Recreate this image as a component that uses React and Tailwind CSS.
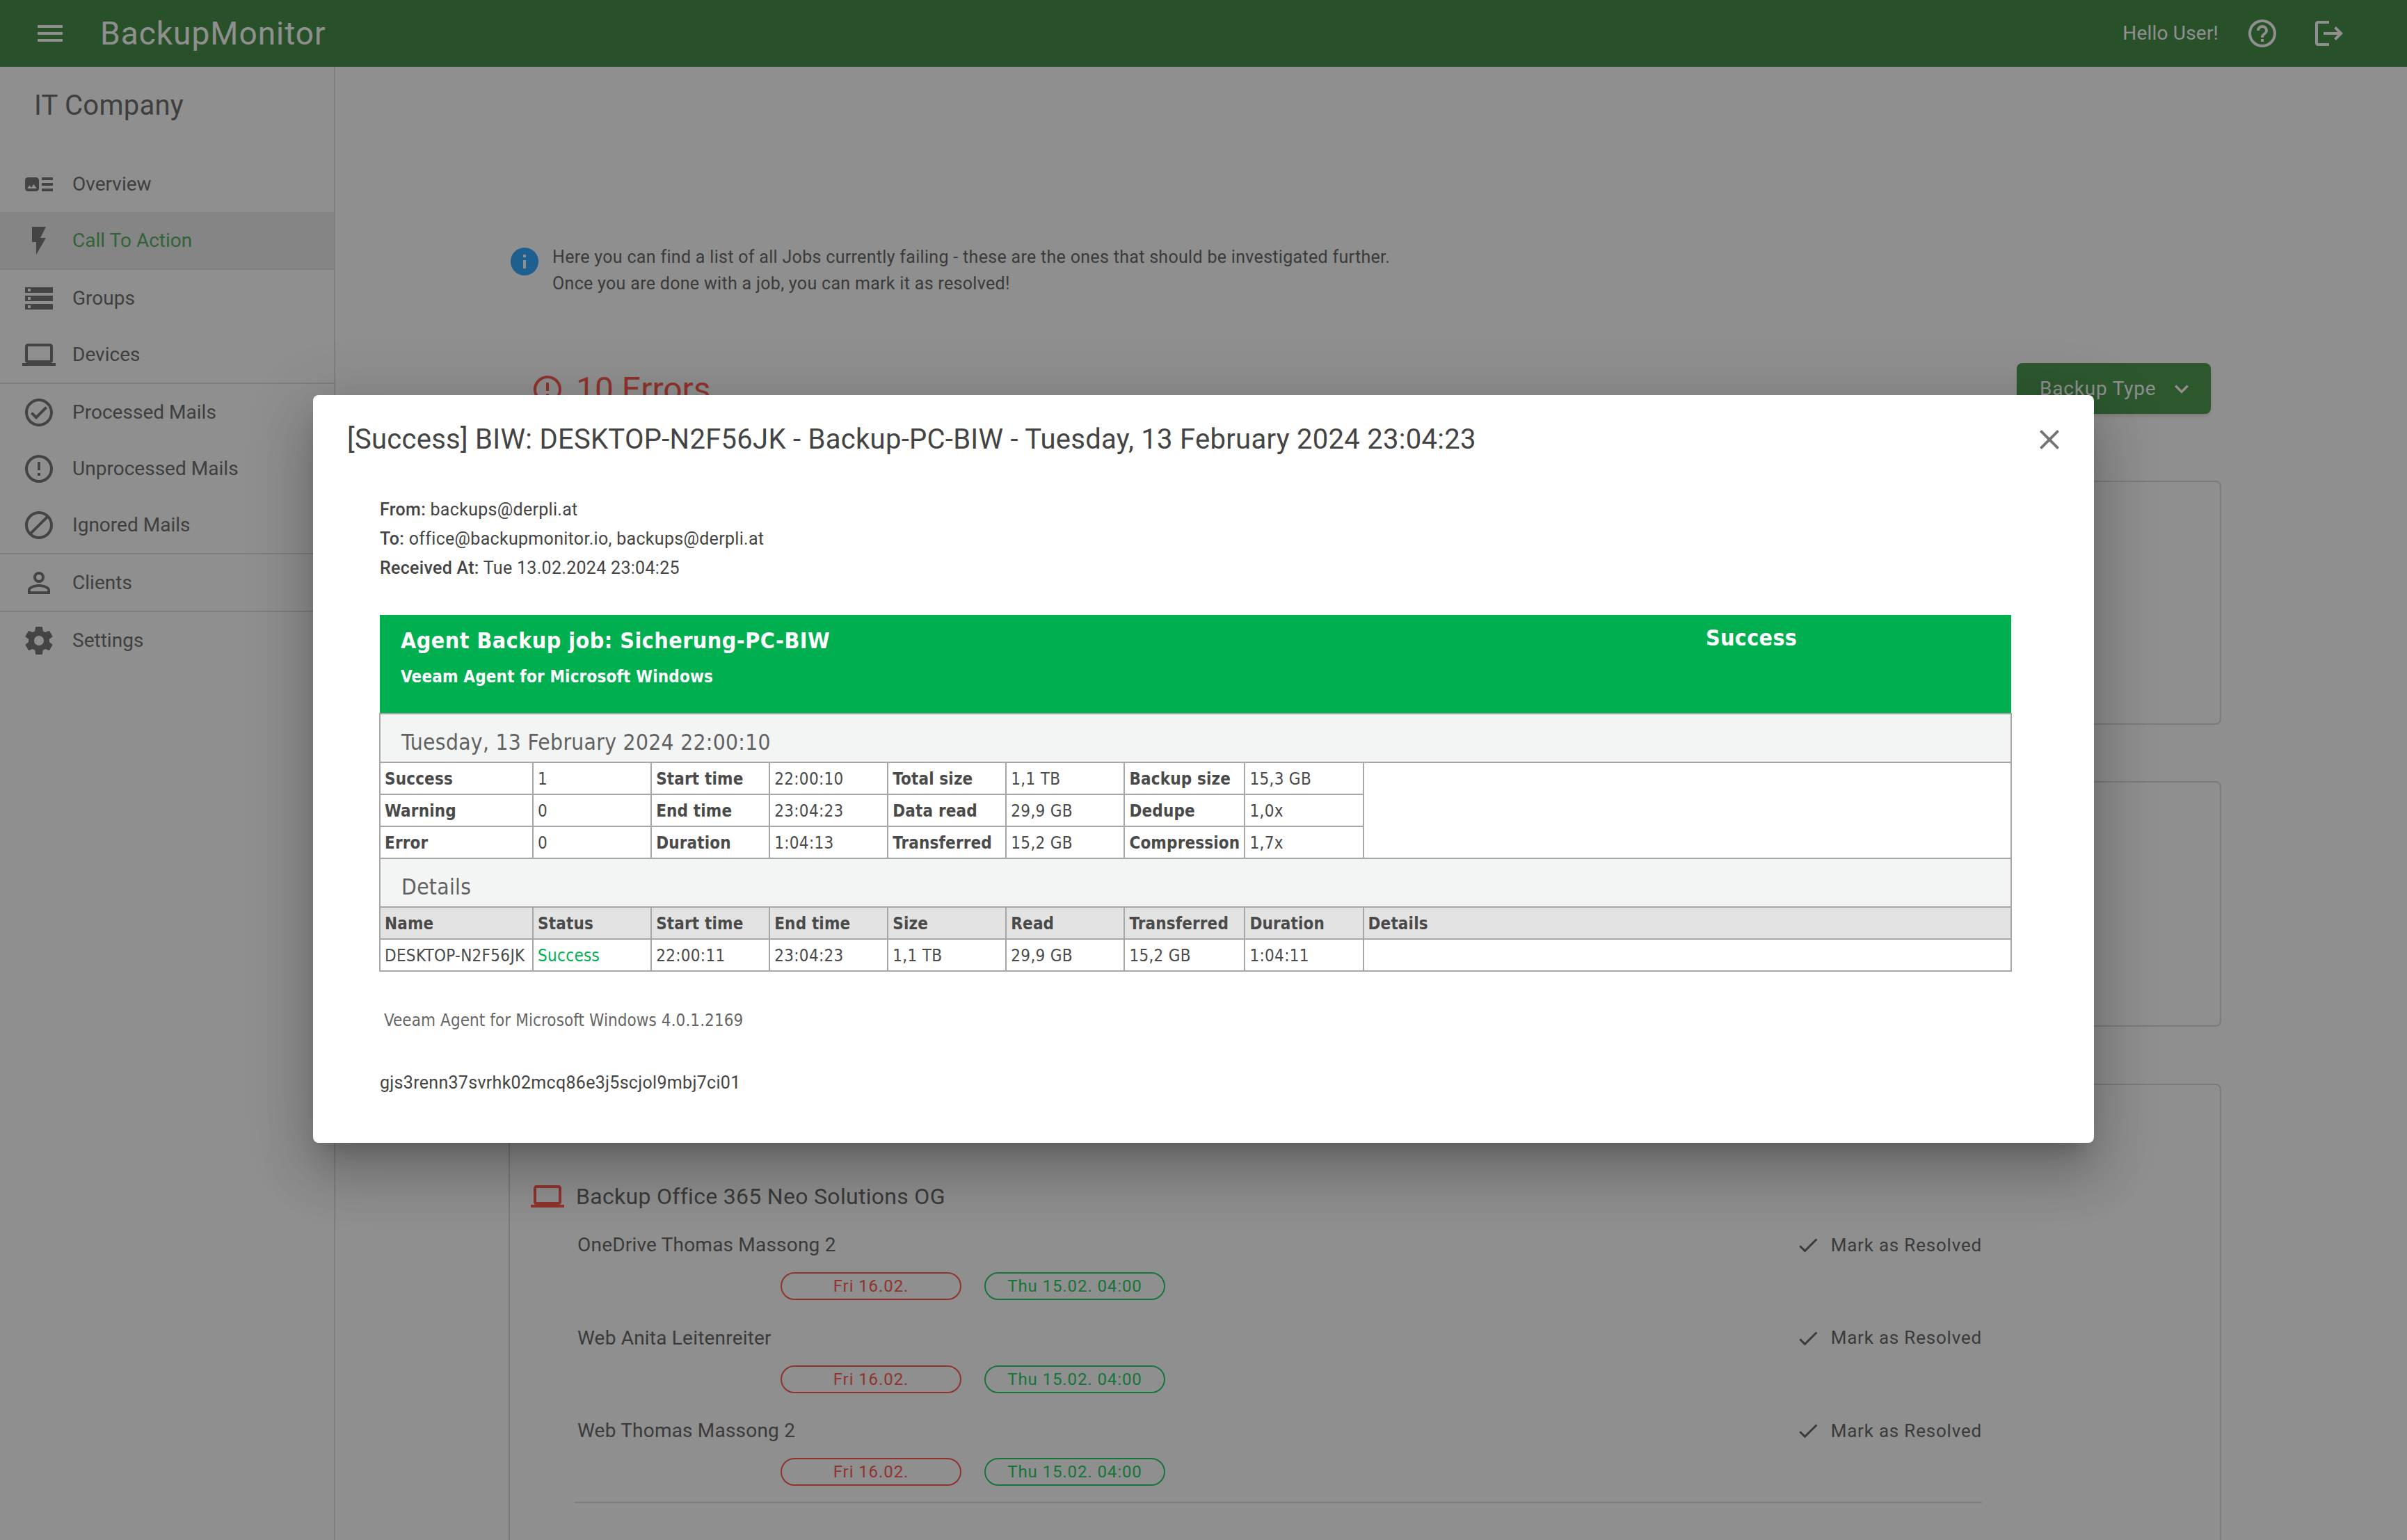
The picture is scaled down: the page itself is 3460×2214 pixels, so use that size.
const P = {
  menu: "M3,6H21V8H3V6M3,11H21V13H3V11M3,16H21V18H3V16Z",
  help: "M11,18H13V16H11V18M12,2A10,10 0 0,0 2,12A10,10 0 0,0 12,22A10,10 0 0,0 22,12A10,10 0 0,0 12,2M12,20C7.59,20 4,16.41 4,12C4,7.59 7.59,4 12,4C16.41,4 20,7.59 20,12C20,16.41 16.41,20 12,20M12,6A4,4 0 0,0 8,10H10A2,2 0 0,1 12,8A2,2 0 0,1 14,10C14,12 11,11.75 11,15H13C13,12.75 16,12.5 16,10A4,4 0 0,0 12,6Z",
  logout: "M17 7L15.59 8.41L18.17 11H8V13H18.17L15.59 15.58L17 17L22 12M4 5H12V3H4C2.9 3 2 3.9 2 5V19C2 20.1 2.9 21 4 21H12V19H4V5Z",
  overview: "M22,13H14V11H22V13M22,7H14V9H22V7M14,17H22V15H14V17M12,9V15C12,16.1 11.1,17 10,17H4C2.9,17 2,16.1 2,15V9C2,7.9 2.9,7 4,7H10C11.1,7 12,7.9 12,9M10.5,15L8.25,12L6.5,14.25L5.25,12.75L3.5,15H10.5Z",
  flash: "M7,2V13H10V22L17,10H13L17,2H7Z",
  storage: "M2 20h20v-4H2v4zm2-3h2v2H4v-2zM2 4v4h20V4H2zm4 3H4V5h2v2zm-4 7h20v-4H2v4zm2-3h2v2H4v-2z",
  laptop: "M4,6H20V16H4M20,18A2,2 0 0,0 22,16V6C22,4.89 21.1,4 20,4H4C2.89,4 2,4.89 2,6V16A2,2 0 0,0 4,18H0V20H24V18H20Z",
  checkCircle: "M12 2C6.5 2 2 6.5 2 12S6.5 22 12 22 22 17.5 22 12 17.5 2 12 2M12 20C7.59 20 4 16.41 4 12S7.59 4 12 4 20 7.59 20 12 16.41 20 12 20M16.59 7.58L10 14.17L7.41 11.59L6 13L10 17L18 9L16.59 7.58Z",
  alert: "M11,15H13V17H11V15M11,7H13V13H11V7M12,2C6.47,2 2,6.5 2,12A10,10 0 0,0 12,22A10,10 0 0,0 22,12A10,10 0 0,0 12,2M12,20A8,8 0 0,1 4,12A8,8 0 0,1 12,4A8,8 0 0,1 20,12A8,8 0 0,1 12,20Z",
  cancel: "M12 2C17.5 2 22 6.5 22 12S17.5 22 12 22 2 17.5 2 12 6.5 2 12 2M12 4C10.1 4 8.4 4.6 7.1 5.7L18.3 16.9C19.3 15.5 20 13.8 20 12C20 7.6 16.4 4 12 4M16.9 18.3L5.7 7.1C4.6 8.4 4 10.1 4 12C4 16.4 7.6 20 12 20C13.9 20 15.6 19.4 16.9 18.3Z",
  account: "M12,4A4,4 0 0,1 16,8A4,4 0 0,1 12,12A4,4 0 0,1 8,8A4,4 0 0,1 12,4M12,6A2,2 0 0,0 10,8A2,2 0 0,0 12,10A2,2 0 0,0 14,8A2,2 0 0,0 12,6M12,13C14.67,13 20,14.33 20,17V20H4V17C4,14.33 9.33,13 12,13M12,14.9C9.03,14.9 5.9,16.36 5.9,17V18.1H18.1V17C18.1,16.36 14.97,14.9 12,14.9Z",
  cog: "M12,15.5A3.5,3.5 0 0,1 8.5,12A3.5,3.5 0 0,1 12,8.5A3.5,3.5 0 0,1 15.5,12A3.5,3.5 0 0,1 12,15.5M19.43,12.97C19.47,12.65 19.5,12.33 19.5,12C19.5,11.67 19.47,11.34 19.43,11L21.54,9.37C21.73,9.22 21.78,8.95 21.66,8.73L19.66,5.27C19.54,5.05 19.27,4.96 19.05,5.05L16.56,6.05C16.04,5.66 15.5,5.32 14.87,5.07L14.5,2.42C14.46,2.18 14.25,2 14,2H10C9.75,2 9.54,2.18 9.5,2.42L9.13,5.07C8.5,5.32 7.96,5.66 7.44,6.05L4.95,5.05C4.73,4.96 4.46,5.05 4.34,5.27L2.34,8.73C2.21,8.95 2.27,9.22 2.46,9.37L4.57,11C4.53,11.34 4.5,11.67 4.5,12C4.5,12.33 4.53,12.65 4.57,12.97L2.46,14.63C2.27,14.78 2.21,15.05 2.34,15.27L4.34,18.73C4.46,18.95 4.73,19.03 4.95,18.95L7.44,17.94C7.96,18.34 8.5,18.68 9.13,18.93L9.5,21.58C9.54,21.82 9.75,22 10,22H14C14.25,22 14.46,21.82 14.5,21.58L14.87,18.93C15.5,18.67 16.04,18.34 16.56,17.94L19.05,18.95C19.27,19.03 19.54,18.95 19.66,18.73L21.66,15.27C21.78,15.05 21.73,14.78 21.54,14.63L19.43,12.97Z",
  close: "M19,6.41L17.59,5L12,10.59L6.41,5L5,6.41L10.59,12L5,17.59L6.41,19L12,13.41L17.59,19L19,17.59L13.41,12L19,6.41Z",
  check: "M21,7L9,19L3.5,13.5L4.91,12.09L9,16.17L19.59,5.59L21,7Z",
  chevron: "M7.41,8.58L12,13.17L16.59,8.58L18,10L12,16L6,10L7.41,8.58Z",
  info: "M13,9H11V7H13M13,17H11V11H13M12,2A10,10 0 0,0 2,12A10,10 0 0,0 12,22A10,10 0 0,0 22,12A10,10 0 0,0 12,2Z",
};

function Icon({ d, className }) {
  return (
    <svg viewBox="0 0 24 24" fill="currentColor" fillRule="evenodd" className={className}>
      <path d={d} />
    </svg>
  );
}

function NavItem({ icon, label, active, iconClass = "" }) {
  return (
    <div className={"flex h-[81px] items-center pl-[32px] " + (active ? "bg-[#ededed]" : "")}>
      <Icon d={icon} className={"h-[48px] w-[48px] shrink-0 text-[#797979] " + iconClass} />
      <span className={"ml-[24px] text-[28px] tracking-[0.02px] " + (active ? "text-[#59b262]" : "text-[#707070]")}>{label}</span>
    </div>
  );
}

function Divider() {
  return <div className="h-[2px] bg-[#e0e0e0]" />;
}

function Job({ name }) {
  return (
    <div className="h-[133.5px]">
      <div className="flex h-[40px] items-center justify-between">
        <span className="pl-[4px] text-[28px] tracking-[0.2px]">{name}</span>
        <span className="flex items-center text-[26px] tracking-[0.8px]">
          <Icon d={P.check} className="mr-[15px] h-[36px] w-[36px]" />
          Mark as Resolved
        </span>
      </div>
      <div className="ml-[296px] mt-[19px] flex gap-[33px] text-[24px] tracking-[0.9px]">
        <span className="flex h-[40px] w-[260px] items-center justify-center rounded-full border-2 border-[#ff5b52] text-[#ff5b52]">Fri 16.02.</span>
        <span className="flex h-[40px] w-[260px] items-center justify-center rounded-full border-2 border-[#29d168] text-[#29d168]">Thu 15.02. 04:00</span>
      </div>
    </div>
  );
}

function Th({ children, className = "" }) {
  return <td className={"border-2 border-[#a7a7a7] px-[6px] pt-[2px] font-bold tracking-[0.15px] " + className}>{children}</td>;
}
function Td({ children, className = "" }) {
  return <td className={"border-2 border-[#a7a7a7] px-[6px] pt-[2px] " + className}>{children}</td>;
}

function StatRow({ cells, extra }) {
  return (
    <tr className="h-[46px]">
      {cells.map((c, i) => (i % 2 === 0 ? <Th key={i}>{c}</Th> : <Td key={i}>{c}</Td>))}
      {extra && <td rowSpan={3} className="border-2 border-[#a7a7a7]" />}
    </tr>
  );
}

function EmailTable() {
  const cols = [220, 170, 170, 170, 170, 170, 173, 170, 931];
  return (
    <table className="ml-[-1px] w-[2347px] table-fixed border-collapse font-['DejaVu_Sans',sans-serif] text-[24px] leading-none text-[#4a4a4a] [font-stretch:condensed]">
      <colgroup>
        {cols.map((w, i) => <col key={i} style={{ width: w }} />)}
      </colgroup>
      <tbody>
        <tr className="h-[142px] bg-[#00b050] text-white">
          <td colSpan={9} className="p-0 align-top">
            <div className="flex">
              <div className="w-[1906px] pl-[30px]">
                <div className="mt-[22px] text-[32px] leading-[30px] font-bold tracking-[0.45px]">Agent Backup job: Sicherung-PC-BIW</div>
                <div className="mt-[24px] text-[24px] leading-[26px] font-bold tracking-[0.17px]">Veeam Agent for Microsoft Windows</div>
              </div>
              <div className="mt-[18px] text-[32px] leading-[30px] font-bold">Success</div>
            </div>
          </td>
        </tr>
        <tr className="h-[70px] bg-[#f3f4f4]">
          <td colSpan={9} className="border-2 border-[#a7a7a7] pl-[30px] pt-[13px] text-[31.5px] text-[#626262]">Tuesday, 13 February 2024 22:00:10</td>
        </tr>
        <StatRow extra cells={["Success", "1", "Start time", "22:00:10", "Total size", "1,1 TB", "Backup size", "15,3 GB"]} />
        <StatRow cells={["Warning", "0", "End time", "23:04:23", "Data read", "29,9 GB", "Dedupe", "1,0x"]} />
        <StatRow cells={["Error", "0", "Duration", "1:04:13", "Transferred", "15,2 GB", "Compression", "1,7x"]} />
        <tr className="h-[70px] bg-[#f3f4f4]">
          <td colSpan={9} className="border-2 border-[#a7a7a7] pl-[30px] pt-[13px] text-[31.5px] text-[#626262]">Details</td>
        </tr>
        <tr className="h-[46px] bg-[#e3e3e3]">
          {["Name", "Status", "Start time", "End time", "Size", "Read", "Transferred", "Duration", "Details"].map((h) => <Th key={h}>{h}</Th>)}
        </tr>
        <tr className="h-[46px]">
          <Td>DESKTOP-N2F56JK</Td>
          <Td className="text-[#00b050]">Success</Td>
          <Td>22:00:11</Td>
          <Td>23:04:23</Td>
          <Td>1,1 TB</Td>
          <Td>29,9 GB</Td>
          <Td>15,2 GB</Td>
          <Td>1:04:11</Td>
          <Td />
        </tr>
      </tbody>
    </table>
  );
}

export default function App() {
  return (
    <div className="relative h-[2214px] w-[3460px] overflow-hidden bg-white font-['Roboto',sans-serif] text-[#6a6a6a]">
      <header className="flex h-[96px] items-center bg-[#4a914a] text-white">
        <Icon d={P.menu} className="ml-[48px] h-[48px] w-[48px]" />
        <span className="ml-[48px] text-[46px] tracking-[1px]">BackupMonitor</span>
        <span className="ml-auto text-[28px] tracking-[0.2px]">Hello User!</span>
        <Icon d={P.help} className="ml-[39px] h-[48px] w-[48px]" />
        <Icon d={P.logout} className="ml-[48px] mr-[88px] h-[48px] w-[48px]" />
      </header>
      <div className="flex">
        <aside className="h-[2118px] w-[482px] shrink-0 border-r-2 border-[#e0e0e0] text-[#707070]">
          <div className="h-[128px] pl-[49px] pt-[28px] text-[40px] leading-[56px] tracking-[0.25px]">IT Company</div>
          <NavItem icon={P.overview} label="Overview" />
          <NavItem icon={P.flash} label="Call To Action" active />
          <Divider />
          <NavItem icon={P.storage} label="Groups" />
          <NavItem icon={P.laptop} label="Devices" />
          <Divider />
          <NavItem icon={P.checkCircle} label="Processed Mails" />
          <NavItem icon={P.alert} label="Unprocessed Mails" />
          <NavItem icon={P.cancel} label="Ignored Mails" iconClass="-scale-x-100" />
          <Divider />
          <NavItem icon={P.account} label="Clients" />
          <Divider />
          <NavItem icon={P.cog} label="Settings" />
        </aside>
        <main className="ml-[249px] w-[2462px]">
          <div className="mt-[256px] flex">
            <Icon d={P.info} className="ml-[-1px] h-[48px] w-[48px] text-[#34aaff]" />
            <div className="ml-[16px] mt-[-1px] text-[25px] leading-[38px] tracking-[0.31px]">
              <div>Here you can find a list of all Jobs currently failing - these are the ones that should be investigated further.</div>
              <div>Once you are done with a job, you can mark it as resolved!</div>
            </div>
          </div>
          <div className="mt-[95px] flex items-start justify-between">
            <div className="ml-[32px] mt-[10px] flex items-center text-[48px] leading-[56px] text-[#ff5b52]">
              <Icon d={P.alert} className="mr-[17px] h-[48px] w-[48px]" />
              10 Errors
            </div>
            <div className="mr-[15px] flex h-[73px] w-[279px] items-center rounded-[8px] bg-[#509d52] pl-[33px] text-[28px] tracking-[0.8px] text-white shadow-md">
              Backup Type
              <Icon d={P.chevron} className="ml-[17px] h-[40px] w-[40px]" />
            </div>
          </div>
          <div className="mt-[96px] h-[351px] rounded-[8px] border-2 border-[#dcdcdc]" />
          <div className="mt-[81px] h-[353px] rounded-[8px] border-2 border-[#dcdcdc]" />
          <div className="mt-[82px] h-[800px] rounded-[8px] border-2 border-[#dcdcdc] px-[30px] pt-[140px]">
            <div className="flex h-[40px] items-center text-[32px] tracking-[0.3px]">
              <Icon d={P.laptop} className="mr-[17px] h-[48px] w-[48px] text-[#ff5b52]" />
              Backup Office 365 Neo Solutions OG
            </div>
            <div className="ml-[63px] mr-[312px] mt-[30px]">
              <Job name="OneDrive Thomas Massong 2" />
              <Job name="Web Anita Leitenreiter" />
              <Job name="Web Thomas Massong 2" />
              <div className="mt-[-12px] h-[2px] bg-[#dedede]" />
            </div>
          </div>
        </main>
      </div>

      <div className="absolute inset-0 flex items-center justify-center bg-black/44 pb-[3px]">
        <div className="w-[2560px] rounded-[8px] bg-white pb-[65px] text-[#444444] shadow-[0_22px_30px_-14px_rgba(0,0,0,0.2),0_48px_76px_6px_rgba(0,0,0,0.14),0_18px_92px_16px_rgba(0,0,0,0.12)]">
          <div className="flex items-start justify-between pl-[49px] pr-[40px] pt-[36px]">
            <h2 className="text-[40px] leading-[56px] tracking-[0.28px]">[Success] BIW: DESKTOP-N2F56JK - Backup-PC-BIW - Tuesday, 13 February 2024 23:04:23</h2>
            <Icon d={P.close} className="mt-[4px] h-[48px] w-[48px] text-[#757575]" />
          </div>
          <div className="px-[96px] pt-[52px] text-[25px] leading-[42px] tracking-[0.3px]">
            <div><b className="font-medium">From:</b> backups@derpli.at</div>
            <div><b className="font-medium">To:</b> office@backupmonitor.io, backups@derpli.at</div>
            <div><b className="font-medium">Received At:</b> Tue 13.02.2024 23:04:25</div>
            <div className="mt-[46px]"><EmailTable /></div>
            <div className="mt-[55px] pl-[6px] font-['DejaVu_Sans',sans-serif] text-[24px] leading-[30px] tracking-[0.08px] text-[#666666] [font-stretch:condensed]">Veeam Agent for Microsoft Windows 4.0.1.2169</div>
            <div className="mt-[54px]">gjs3renn37svrhk02mcq86e3j5scjol9mbj7ci01</div>
          </div>
        </div>
      </div>
    </div>
  );
}
